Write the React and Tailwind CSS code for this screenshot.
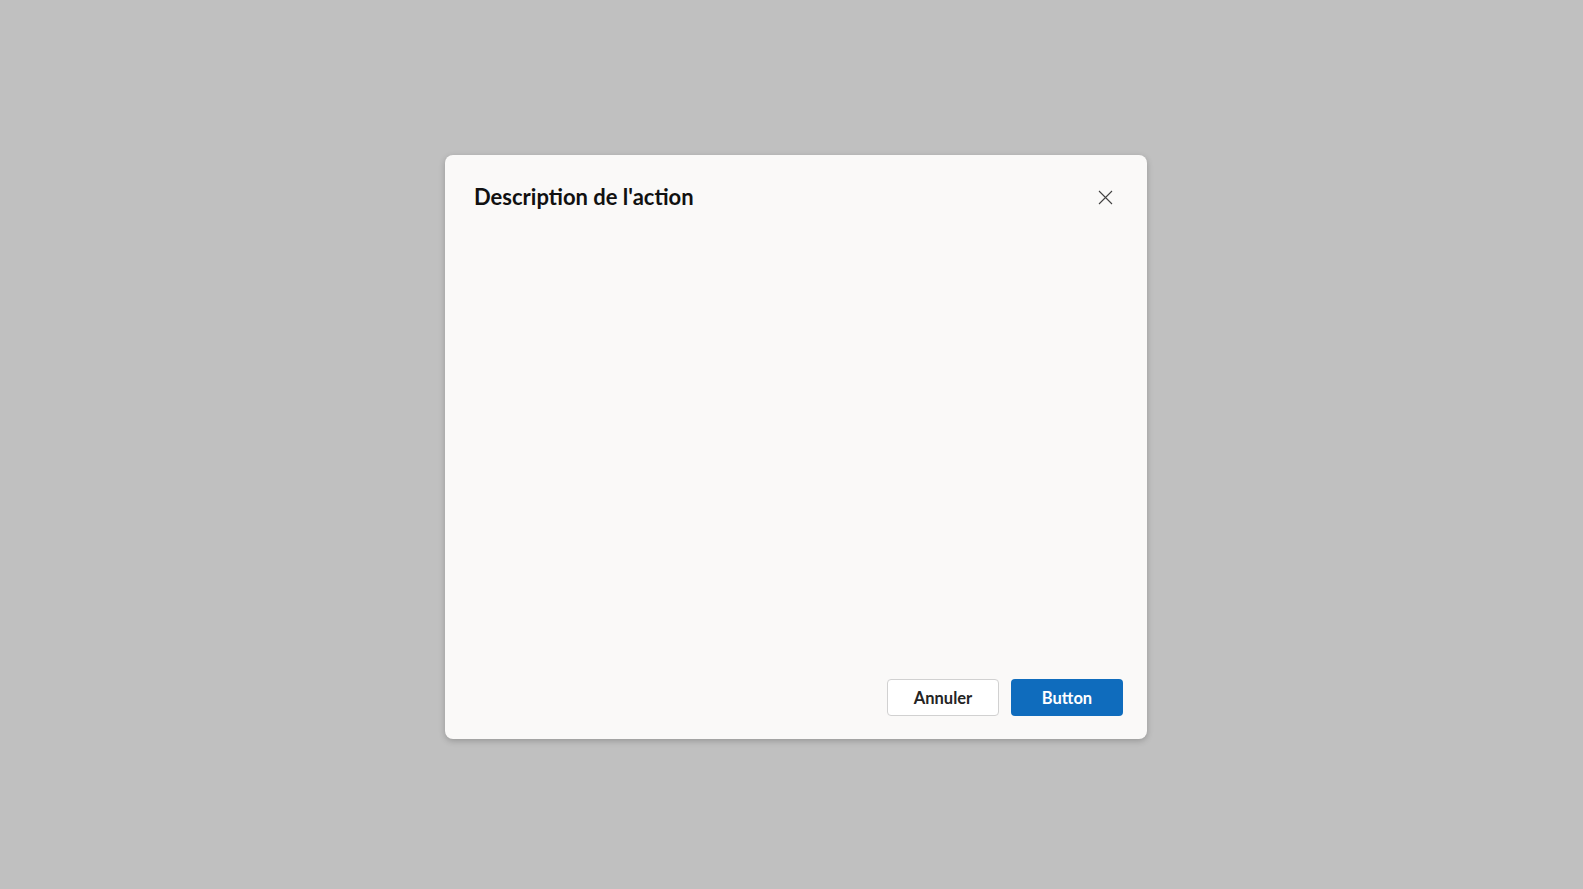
export default function App() {
  return (
    <div className="w-[1583px] h-[889px] bg-[#c0c0c0] pl-[445px] pt-[155px]" style={{ fontFamily: "Lato, 'Noto Sans', sans-serif" }}>
      <div className="w-[702px] h-[584px] bg-[#faf9f8] rounded-[8px] shadow-[0_2px_6px_rgba(0,0,0,0.22)] flex flex-col pl-[29px] pr-[24px] pt-[24px] pb-[23px]">
        <div className="flex items-start justify-between">
          <h1 className="text-[22px] leading-[28px] mt-[4px] font-bold text-[#111111]">Description de l'action</h1>
          <button className="w-[32px] h-[32px] flex items-center justify-center mr-[2px] mt-[2px] text-[#424242]">
            <svg width="15" height="15" viewBox="0 0 15 15" fill="none" stroke="currentColor" strokeWidth="1.1">
              <path d="M1 1L14 14M14 1L1 14" />
            </svg>
          </button>
        </div>
        <div className="flex-1" />
        <div className="flex justify-end gap-[12px]">
          <button className="w-[112px] h-[37px] pt-[2px] rounded-[4px] border border-[#d1d1d1] bg-white text-[#242424] text-[16.5px] font-bold">Annuler</button>
          <button className="w-[112px] h-[37px] pt-[2px] rounded-[4px] bg-[#0f6cbd] text-white text-[16.5px] font-bold">Button</button>
        </div>
      </div>
    </div>
  );
}
